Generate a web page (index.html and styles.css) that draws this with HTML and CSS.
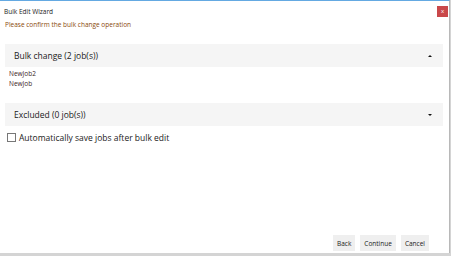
FILE: index.html
```html
<!DOCTYPE html>
<html lang="en">
<head>
    <meta charset="UTF-8">
    <title>Bulk Edit Wizard</title>
    <link rel="stylesheet" href="styles.css">
</head>
<body>
    <div class="window">
        <div class="titlebar">
            <span class="title">Bulk Edit Wizard</span>
            <button class="close-btn">x</button>
        </div>
        <p class="subtitle">Please confirm the bulk change operation</p>

        <div class="panel panel-first">
            <div class="panel-header">
                <span>Bulk change (2 job(s))</span>
                <span class="caret up"></span>
            </div>
            <div class="panel-body">
                <div class="job">NewJob2</div>
                <div class="job">NewJob</div>
            </div>
        </div>

        <div class="panel">
            <div class="panel-header">
                <span>Excluded (0 job(s))</span>
                <span class="caret down"></span>
            </div>
        </div>

        <label class="autosave">
            <span class="box"></span>
            Automatically save jobs after bulk edit
        </label>

        <div class="footer">
            <button class="btn">Back</button>
            <button class="btn">Continue</button>
            <button class="btn">Cancel</button>
        </div>
    </div>
</body>
</html>
```

FILE: styles.css
```css
html, body {
    margin: 0;
    padding: 0;
    background-color: #d4d4d4;
}

body {
    font-family: 'Open Sans', 'Noto Sans', sans-serif;
    color: #222;
    width: 451px;
    height: 256px;
    overflow: hidden;
}

.window {
    width: 449px;
    height: 252px;
    background-color: white;
    border-top: 1px solid #64a9e2;
    border-right: 1px solid #b8b8b8;
    display: flex;
    flex-direction: column;
}

.titlebar {
    display: flex;
    justify-content: space-between;
    align-items: center;
    height: 16px;
    padding: 2px 1px 0 4px;
}

.title {
    font-size: 6.5px;
    color: #1a1a1a;
}

.close-btn {
    width: 11px;
    height: 11px;
    padding: 0;
    border: none;
    background-color: #c9484a;
    color: white;
    font-size: 6px;
    line-height: 11px;
    font-family: inherit;
}

.subtitle {
    margin: 1px 0 0 5px;
    font-size: 6.5px;
    color: #8a4a0c;
    line-height: 9px;
}

.panel {
    margin: 0 6px 0 5px;
}

.panel-first {
    margin-top: 15px;
}

.panel-header {
    display: flex;
    justify-content: space-between;
    align-items: center;
    height: 23px;
    padding: 0 11px 0 9px;
    background-color: #f5f5f5;
    font-size: 8.5px;
    color: #1a1a1a;
}

.panel-body {
    padding: 2px 4px 0;
    height: 34px;
}

.job {
    font-size: 6.5px;
    line-height: 10px;
    color: #3a1e1e;
}

.caret {
    width: 0;
    height: 0;
    border-left: 2px solid transparent;
    border-right: 2px solid transparent;
}

.caret.up {
    border-bottom: 2px solid #111;
}

.caret.down {
    border-top: 2px solid #111;
}

.autosave {
    display: flex;
    align-items: center;
    gap: 3px;
    margin: 6px 0 0 7px;
    font-size: 8.5px;
    color: #1a1a1a;
}

.box {
    width: 7px;
    height: 7px;
    border: 1px solid #777;
    background-color: white;
}

.footer {
    margin-top: auto;
    display: flex;
    justify-content: flex-end;
    gap: 5px;
    padding: 0 20px 2px 0;
}

.btn {
    height: 16px;
    padding: 0 4px;
    border: none;
    background-color: #efefef;
    font-family: inherit;
    font-size: 6.5px;
    color: #1a1a1a;
}
```
